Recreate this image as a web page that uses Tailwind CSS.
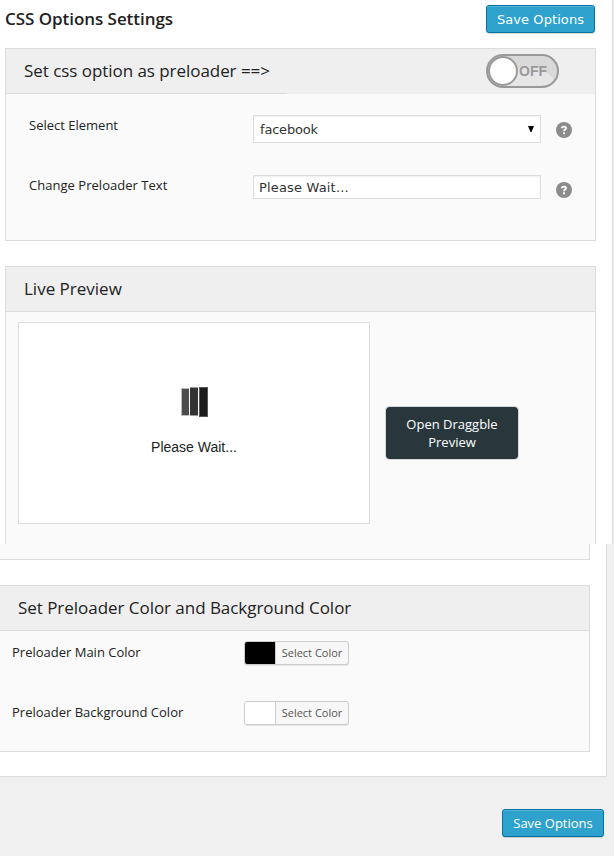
<!DOCTYPE html>
<html lang="en">
<head>
<meta charset="utf-8">
<title>CSS Options Settings</title>
<script src="https://cdn.jsdelivr.net/npm/@tailwindcss/browser@4"></script>
</head>
<body class="w-[614px] h-[856px] overflow-hidden bg-[#f0f0f0] font-['Open_Sans',sans-serif] text-[13px] leading-[18px] text-[#222]">
<section class="w-[613px] h-[544px] overflow-hidden bg-white border-r border-[#dcdcdc] pl-[5px] pr-4">
  <div class="h-12 flex justify-between pt-[5px]">
    <h1 class="text-[17px] leading-7 font-semibold tracking-[-0.05px] whitespace-nowrap">CSS Options Settings</h1>
    <button class="mr-px w-[109px] h-7 pt-0.5 rounded-[3px] border border-[#0074a2] bg-[#2ea2cc] shadow-[inset_0_1px_0_rgba(120,200,230,0.5),0_1px_0_rgba(0,0,0,0.15)] text-white font-['DejaVu_Sans',sans-serif] text-[13px] tracking-[0.08px] whitespace-nowrap">Save Options</button>
  </div>
  <div class="w-[591px] h-[193px] border border-[#dcdcdc] bg-[#fafafa]">
    <div class="relative h-[45px] bg-[#efefef] flex items-start justify-between pl-[18px] pr-9 pt-[5px]">
      <h2 class="text-[17px] leading-6 pt-[5px] tracking-[-0.05px] whitespace-nowrap">Set css option as preloader ==&gt;</h2>
      <div class="w-[73px] h-[34px] rounded-full border-2 border-[#999] bg-[radial-gradient(circle_at_40px_42px,#e6e6e6_31px,#d9d9d9_32px)] flex items-center">
        <div class="w-[30px] h-[30px] shrink-0 rounded-full border-2 border-[#999] bg-white"></div>
        <span class="font-['Liberation_Sans',sans-serif] font-bold text-[14px] text-[#999] ml-px">OFF</span>
      </div>
      <div class="absolute left-0 bottom-0 w-[281px] h-px bg-[#dcdcdc]"></div>
    </div>
    <div class="grid grid-cols-[224px_288px_1fr] pl-[23px] pt-[21px]">
      <label class="h-[60px] pt-px">Select Element</label>
      <div class="h-7 border border-[#ddd] bg-white shadow-[inset_0_1px_2px_rgba(0,0,0,0.07)] flex items-center justify-between pl-[6px] pr-[6px] font-['DejaVu_Sans',sans-serif] text-[#333]"><span class="pt-0.5 tracking-[-0.2px]">facebook</span>
        <svg class="w-[6px] h-[6px]" viewBox="0 0 6 6"><path d="M0 0h6L3.5 6h-1z" fill="#000"/></svg></div>
      <svg class="w-4 h-4 ml-[15px] mt-[7px]" viewBox="0 0 16 16"><circle cx="8" cy="8" r="8" fill="#8c8c8c"/><path d="M5.8 6.2C5.8 4 10.2 4 10.1 6.2C10 7.6 8 7.6 8 9.2" fill="none" stroke="#fff" stroke-width="1.8"/><rect x="7" y="10.3" width="2" height="2" fill="#fff"/></svg>
      <label class="h-[60px] pt-px tracking-[0.03px]">Change Preloader Text</label>
      <div class="h-6 border border-[#ddd] bg-white shadow-[inset_0_1px_2px_rgba(0,0,0,0.07)] flex items-center pl-[5px] pt-0.5 font-['DejaVu_Sans',sans-serif] tracking-[0.17px] text-[#333]">Please Wait...</div>
      <svg class="w-4 h-4 ml-[15px] mt-[7px]" viewBox="0 0 16 16"><circle cx="8" cy="8" r="8" fill="#8c8c8c"/><path d="M5.8 6.2C5.8 4 10.2 4 10.1 6.2C10 7.6 8 7.6 8 9.2" fill="none" stroke="#fff" stroke-width="1.8"/><rect x="7" y="10.3" width="2" height="2" fill="#fff"/></svg>
    </div>
  </div>
  <div class="mt-[25px] w-[591px] h-[290px] border border-[#dcdcdc] bg-[#fafafa]">
    <div class="h-[45px] border-b border-[#dcdcdc] bg-[#efefef] pl-[18px] flex items-center"><h2 class="text-[17px] leading-6">Live Preview</h2></div>
    <div class="flex pl-3 pt-[10px]">
      <div class="w-[352px] h-[202px] shrink-0 border border-[#dcdcdc] bg-white flex flex-col items-center pt-[63px]">
        <div class="flex items-center gap-px h-[31px] pl-px">
          <div class="w-2 h-[28px] bg-[#4c4c4c] border border-[#bbb] border-r-0"></div>
          <div class="w-2 h-[29px] bg-[#333] border-y border-[#999]"></div>
          <div class="w-[9px] h-[30px] bg-[#1c1c1c] border border-[#555]"></div>
        </div>
        <p class="mt-[21px] font-['Liberation_Sans',sans-serif] text-[14px]">Please Wait...</p>
      </div>
      <button class="ml-[15px] mt-[84px] w-[134px] h-[54px] rounded-[4px] border border-[#d5d8d9] bg-[#29373c] bg-clip-padding text-white font-medium leading-[18px]">Open Draggble<br>Preview</button>
    </div>
  </div>
</section>
<section class="w-[607px] h-[233px] bg-white border-r border-b border-[#dcdcdc]">
  <div class="w-[590px] h-4 border-r border-b border-[#dcdcdc] bg-[#fafafa]"></div>
  <div class="mt-[25px] w-[590px] h-[167px] border-y border-r border-[#dcdcdc] bg-[#fafafa]">
    <div class="h-[45px] border-b border-[#dcdcdc] bg-[#efefef] pl-[18px] flex items-center"><h2 class="text-[17px] leading-6 tracking-[-0.04px] whitespace-nowrap">Set Preloader Color and Background Color</h2></div>
    <div class="grid grid-cols-[232px_105px] pl-3 pt-[10px]">
      <label class="h-[60px] pt-[2px]">Preloader Main Color</label>
      <div class="h-6 flex rounded-[3px] border border-[#ccc] bg-[#f7f7f7] shadow-[0_1px_0_rgba(0,0,0,0.08)] text-[11px] leading-[22px] text-[#555] overflow-hidden"><div class="w-[30px] bg-black"></div><div class="flex-1 border-l border-[#ccc] text-center whitespace-nowrap">Select Color</div></div>
      <label class="h-[60px] pt-[2px]">Preloader Background Color</label>
      <div class="h-6 flex rounded-[3px] border border-[#ccc] bg-[#f7f7f7] shadow-[0_1px_0_rgba(0,0,0,0.08)] text-[11px] leading-[22px] text-[#555] overflow-hidden"><div class="w-[30px] bg-white"></div><div class="flex-1 border-l border-[#ccc] text-center whitespace-nowrap">Select Color</div></div>
    </div>
  </div>
</section>
<footer class="flex justify-end pt-8 pr-[10px]">
  <button class="w-[102px] h-7 rounded-[3px] border border-[#0074a2] bg-[#2ea2cc] shadow-[inset_0_1px_0_rgba(120,200,230,0.5),0_1px_0_rgba(0,0,0,0.15)] text-white whitespace-nowrap">Save Options</button>
</footer>
</body>
</html>
